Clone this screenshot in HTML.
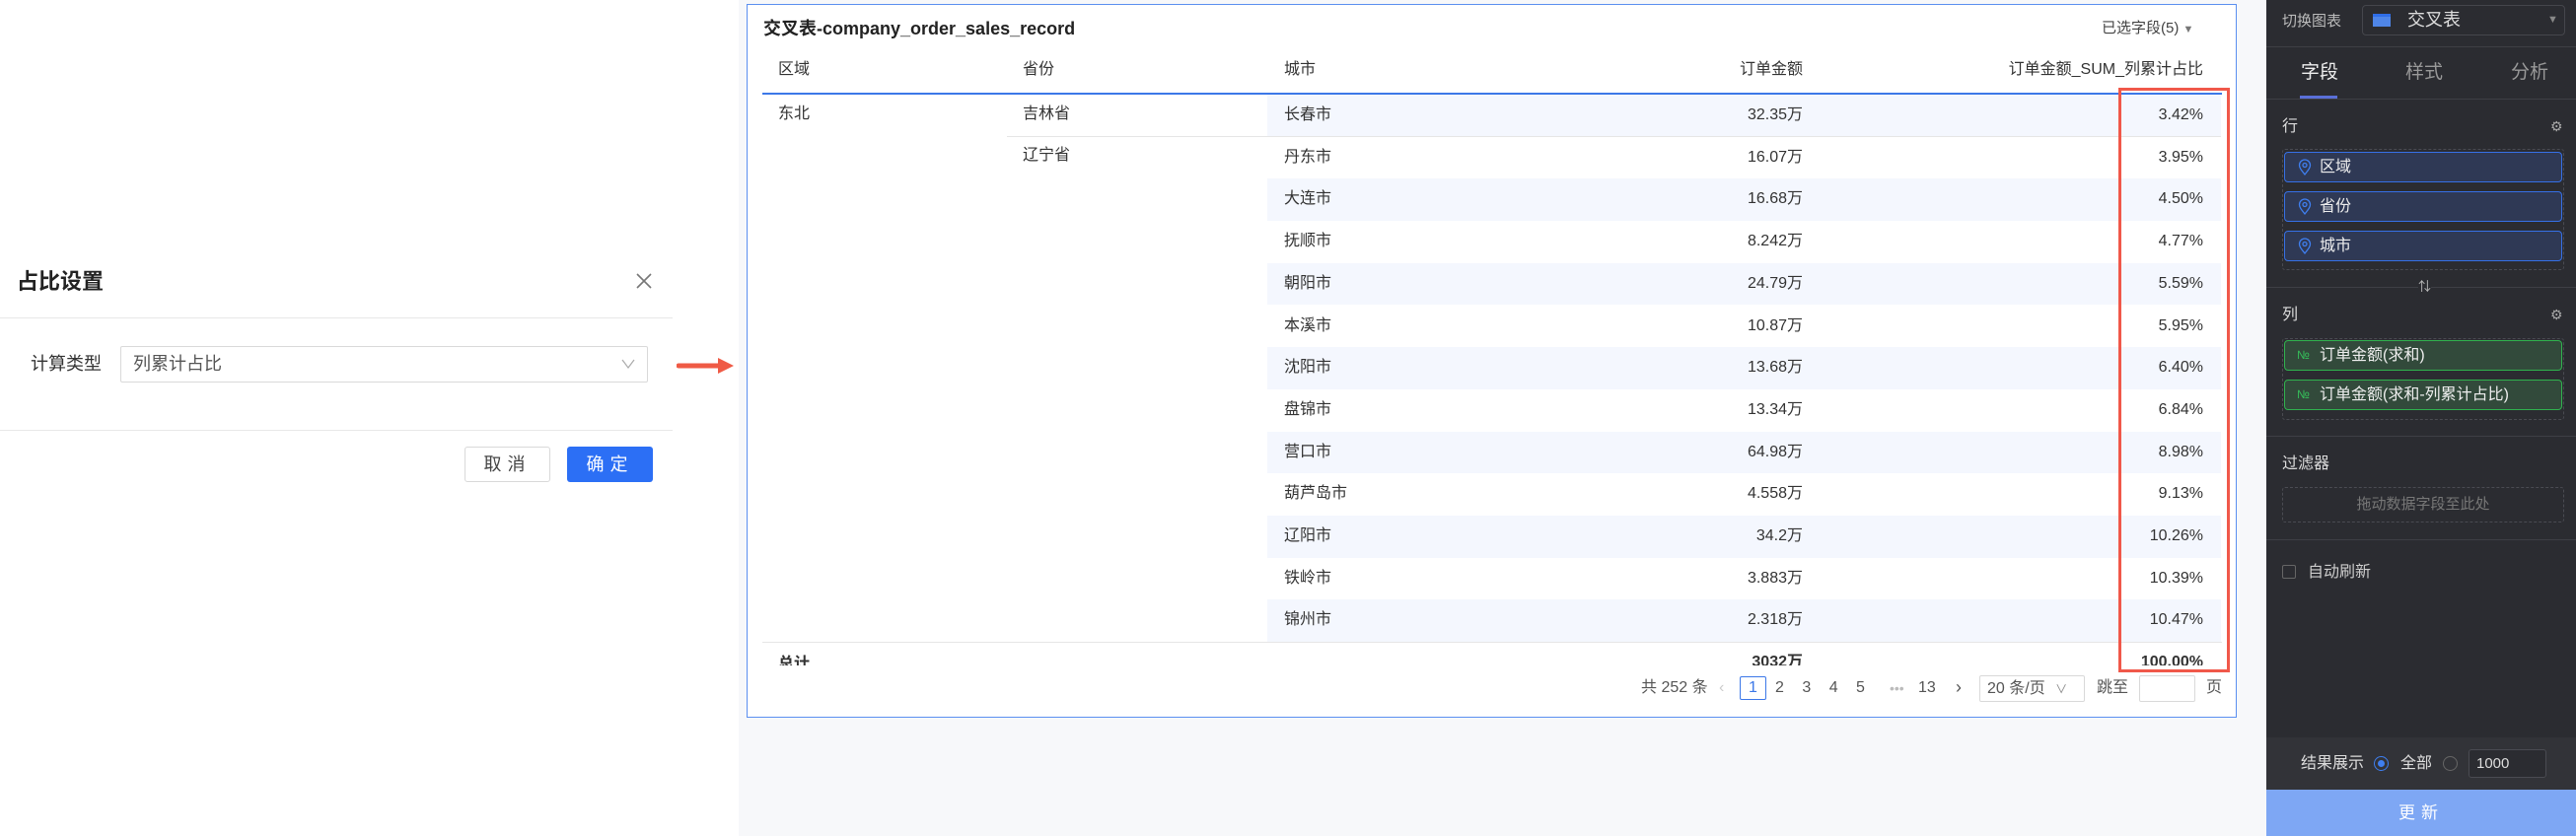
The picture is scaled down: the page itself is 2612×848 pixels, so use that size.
<!DOCTYPE html>
<html><head><meta charset="utf-8"><style>
*{margin:0;padding:0;box-sizing:border-box}
body{width:2612px;height:848px;position:relative;overflow:hidden;background:#fff;font-family:"Liberation Sans","Noto Sans CJK SC",sans-serif;color:#333;line-height:1.25}
.a{position:absolute;white-space:nowrap}
.t{font-size:16px;line-height:20px}
.r{text-align:right}
</style></head><body>
<!-- left dialog -->
<div class="a" style="left:17px;top:272px;font-size:22px;font-weight:bold;color:#222">占比设置</div>
<svg class="a" style="left:644px;top:276px" width="18" height="18"><path d="M2 2L16 16M16 2L2 16" stroke="#777" stroke-width="1.6"/></svg>
<div class="a" style="left:0;top:322px;width:682px;height:1px;background:#e8e8e8"></div>
<div class="a" style="left:31px;top:358px;font-size:18px;color:#333">计算类型</div>
<div class="a" style="left:122px;top:351px;width:535px;height:37px;border:1px solid #d9d9d9;border-radius:2px"></div>
<div class="a" style="left:135px;top:358px;font-size:18px;color:#555">列累计占比</div>
<svg class="a" style="left:630px;top:363px" width="14" height="12"><path d="M1 2L7 10L13 2" fill="none" stroke="#aaa" stroke-width="1.2"/></svg>
<div class="a" style="left:0;top:436px;width:682px;height:1px;background:#e8e8e8"></div>
<div class="a" style="left:471px;top:453px;width:87px;height:36px;border:1px solid #d9d9d9;border-radius:3px;font-size:18px;line-height:34px;text-align:center;color:#444;letter-spacing:6px">取消</div>
<div class="a" style="left:575px;top:453px;width:87px;height:36px;background:#2c6ff5;border-radius:3px;font-size:18px;line-height:36px;text-align:center;color:#fff;letter-spacing:6px">确定</div>
<svg class="a" style="left:686px;top:361px" width="60" height="20"><path d="M2 10H46" stroke="#ef5a45" stroke-width="5" stroke-linecap="round"/><path d="M42 2L58 10L42 18Z" fill="#ef5a45"/></svg>
<!-- gray bg -->
<div class="a" style="left:749px;top:0;width:1549px;height:848px;background:#f7f8fa"></div>
<!-- card -->
<div class="a" style="left:757px;top:4px;width:1511px;height:724px;background:#fff;border:1.5px solid #5b8ff0"></div>
<div class="a" style="left:774px;top:18px;font-size:18px;font-weight:bold;color:#222">交叉表-company_order_sales_record</div>
<div class="a" style="left:2131px;top:20px;font-size:15px;color:#444">已选字段(5) <span style="font-size:11px;color:#777">▼</span></div>
<div class="a t" style="left:789px;top:61px">区域</div>
<div class="a t" style="left:1037px;top:61px">省份</div>
<div class="a t" style="left:1302px;top:61px">城市</div>
<div class="a t r" style="left:1628px;width:200px;top:61px">订单金额</div>
<div class="a t r" style="left:1934px;width:300px;top:61px">订单金额_SUM_列累计占比</div>
<div class="a" style="left:773px;top:94px;width:1480px;height:2px;background:#3c78e8"></div>
<div class="a" style="left:773px;top:96px;width:1480px;height:579px;overflow:hidden">
<div class="a" style="left:512px;top:0;width:967px;height:42.7px;background:#f4f7fe"></div>
<div class="a" style="left:512px;top:85.4px;width:967px;height:42.7px;background:#f4f7fe"></div>
<div class="a" style="left:512px;top:170.8px;width:967px;height:42.7px;background:#f4f7fe"></div>
<div class="a" style="left:512px;top:256.2px;width:967px;height:42.7px;background:#f4f7fe"></div>
<div class="a" style="left:512px;top:341.6px;width:967px;height:42.7px;background:#f4f7fe"></div>
<div class="a" style="left:512px;top:427px;width:967px;height:42.7px;background:#f4f7fe"></div>
<div class="a" style="left:512px;top:512.4px;width:967px;height:42.7px;background:#f4f7fe"></div>
<div class="a" style="left:248px;top:42px;width:1231px;height:1px;background:#e6e6e6"></div>
<div class="a" style="left:0;top:555px;width:1480px;height:1px;background:#e6e6e6"></div>
<div class="a t" style="left:16px;top:10px">东北</div>
<div class="a t" style="left:264px;top:10px">吉林省</div>
<div class="a t" style="left:264px;top:52px">辽宁省</div>
</div>
<div class="a" style="left:773px;top:96px;width:1480px;height:579px;overflow:hidden;font-size:16px">
<div class="a" style="left:529px;top:0;line-height:42.7px">长春市<br>丹东市<br>大连市<br>抚顺市<br>朝阳市<br>本溪市<br>沈阳市<br>盘锦市<br>营口市<br>葫芦岛市<br>辽阳市<br>铁岭市<br>锦州市</div>
<div class="a r" style="left:855px;width:200px;top:0;line-height:42.7px">32.35万<br>16.07万<br>16.68万<br>8.242万<br>24.79万<br>10.87万<br>13.68万<br>13.34万<br>64.98万<br>4.558万<br>34.2万<br>3.883万<br>2.318万<br><b>3032万</b></div>
<div class="a r" style="left:1261px;width:200px;top:0;line-height:42.7px">3.42%<br>3.95%<br>4.50%<br>4.77%<br>5.59%<br>5.95%<br>6.40%<br>6.84%<br>8.98%<br>9.13%<br>10.26%<br>10.39%<br>10.47%<br><b>100.00%</b></div>
<div class="a t" style="left:16px;top:568px;font-weight:bold">总计</div>
</div>
<div class="a" style="left:2148px;top:89px;width:113px;height:593px;border:3.5px solid #f0584a"></div>
<!-- pagination -->
<div class="a" style="left:1664px;top:688px;font-size:16px;line-height:20px;color:#555">共 252 条</div>
<div class="a" style="left:1743px;top:688px;font-size:16px;line-height:20px;color:#ccc">‹</div>
<div class="a" style="left:1764px;top:686px;width:27px;height:24px;border:1px solid #3c78e8;border-radius:2px;color:#3c78e8;font-size:16px;line-height:22px;text-align:center">1</div>
<div class="a" style="left:1800px;top:688px;font-size:16px;line-height:20px;color:#555;word-spacing:14px">2 3 4 5</div>
<div class="a" style="left:1916px;top:688px;font-size:14px;line-height:20px;color:#bbb">•••</div>
<div class="a" style="left:1945px;top:688px;font-size:16px;line-height:20px;color:#555">13</div>
<div class="a" style="left:1983px;top:686px;font-size:18px;line-height:22px;color:#555">›</div>
<div class="a" style="left:2007px;top:685px;width:107px;height:27px;border:1px solid #d9d9d9;border-radius:2px;font-size:16px;color:#555;line-height:25px;padding-left:7px">20 条/页 <span style="font-size:12px;color:#888;margin-left:6px">∨</span></div>
<div class="a" style="left:2126px;top:688px;font-size:16px;line-height:20px;color:#555">跳至</div>
<div class="a" style="left:2169px;top:685px;width:57px;height:27px;border:1px solid #d9d9d9;border-radius:2px"></div>
<div class="a" style="left:2237px;top:688px;font-size:16px;line-height:20px;color:#555">页</div>
<!-- sidebar -->
<div class="a" style="left:2298px;top:0;width:314px;height:848px;background:#2b2c31"></div>
<div class="a" style="left:2314px;top:12px;font-size:15px;line-height:19px;color:#bbb">切换图表</div>
<div class="a" style="left:2395px;top:5px;width:206px;height:31px;border:1px solid #45464c;border-radius:4px"></div>
<div class="a" style="left:2406px;top:14px;width:18px;height:13px;background:#4f86e8;border-top:3px solid #2f6ee8"></div>
<div class="a" style="left:2441px;top:9px;font-size:18px;line-height:22px;color:#ddd">交叉表</div>
<div class="a" style="left:2583px;top:14px;font-size:11px;line-height:13px;color:#888">▼</div>
<div class="a" style="left:2298px;top:47px;width:314px;height:1px;background:#3e3f45"></div>
<div class="a" style="left:2333px;top:62px;font-size:19px;line-height:24px;color:#eee">字段</div>
<div class="a" style="left:2439px;top:62px;font-size:19px;line-height:24px;color:#999">样式</div>
<div class="a" style="left:2546px;top:62px;font-size:19px;line-height:24px;color:#999">分析</div>
<div class="a" style="left:2332px;top:97px;width:38px;height:3px;background:#5a6fd8"></div>
<div class="a" style="left:2298px;top:100px;width:314px;height:1px;background:#3e3f45"></div>
<div class="a" style="left:2314px;top:119px;font-size:16px;line-height:20px;color:#ddd">行</div>
<div class="a" style="left:2586px;top:119px;font-size:14px;line-height:18px;color:#aaa">⚙</div>
<div class="a" style="left:2314px;top:151px;width:286px;height:123px;border:1px dashed #4a4b52;border-radius:3px"></div>
<div class="a" style="left:2316px;top:154px;width:282px;height:31px;background:#2f3955;border:1px solid #3670e6;border-radius:4px"></div>
<div class="a" style="left:2316px;top:194px;width:282px;height:31px;background:#2f3955;border:1px solid #3670e6;border-radius:4px"></div>
<div class="a" style="left:2316px;top:234px;width:282px;height:31px;background:#2f3955;border:1px solid #3670e6;border-radius:4px"></div>
<svg class="a" style="left:2330px;top:161px" width="14" height="100"><g fill="none" stroke="#3f7ff0" stroke-width="1.3"><path d="M7 16C3 11 1.5 9 1.5 6.5A5.5 5.5 0 0 1 12.5 6.5C12.5 9 11 11 7 16Z"/><circle cx="7" cy="6.5" r="2"/><path transform="translate(0,40)" d="M7 16C3 11 1.5 9 1.5 6.5A5.5 5.5 0 0 1 12.5 6.5C12.5 9 11 11 7 16Z"/><circle cx="7" cy="46.5" r="2"/><path transform="translate(0,80)" d="M7 16C3 11 1.5 9 1.5 6.5A5.5 5.5 0 0 1 12.5 6.5C12.5 9 11 11 7 16Z"/><circle cx="7" cy="86.5" r="2"/></g></svg>
<div class="a" style="left:2352px;top:160px;font-size:16px;line-height:20px;color:#eee">区域</div>
<div class="a" style="left:2352px;top:200px;font-size:16px;line-height:20px;color:#eee">省份</div>
<div class="a" style="left:2352px;top:240px;font-size:16px;line-height:20px;color:#eee">城市</div>
<div class="a" style="left:2298px;top:291px;width:314px;height:1px;background:#3e3f45"></div>
<div class="a" style="left:2452px;top:283px;font-size:13px;line-height:16px;color:#bbb;background:#2b2c31">⇅</div>
<div class="a" style="left:2314px;top:310px;font-size:16px;line-height:20px;color:#ddd">列</div>
<div class="a" style="left:2586px;top:310px;font-size:14px;line-height:18px;color:#aaa">⚙</div>
<div class="a" style="left:2314px;top:343px;width:286px;height:83px;border:1px dashed #4a4b52;border-radius:3px"></div>
<div class="a" style="left:2316px;top:345px;width:282px;height:31px;background:#324a3b;border:1px solid #30b24e;border-radius:4px"></div>
<div class="a" style="left:2316px;top:385px;width:282px;height:31px;background:#324a3b;border:1px solid #30b24e;border-radius:4px"></div>
<div class="a" style="left:2329px;top:353px;font-size:12px;line-height:15px;color:#35c05a">№</div>
<div class="a" style="left:2329px;top:393px;font-size:12px;line-height:15px;color:#35c05a">№</div>
<div class="a" style="left:2352px;top:351px;font-size:16px;line-height:20px;color:#eee">订单金额(求和)</div>
<div class="a" style="left:2352px;top:391px;font-size:16px;line-height:20px;color:#eee">订单金额(求和-列累计占比)</div>
<div class="a" style="left:2298px;top:442px;width:314px;height:1px;background:#3e3f45"></div>
<div class="a" style="left:2314px;top:461px;font-size:16px;line-height:20px;color:#ddd">过滤器</div>
<div class="a" style="left:2314px;top:494px;width:286px;height:36px;border:1px dashed #4a4b52;border-radius:3px;font-size:15px;color:#777;text-align:center;line-height:34px">拖动数据字段至此处</div>
<div class="a" style="left:2298px;top:547px;width:314px;height:1px;background:#3e3f45"></div>
<div class="a" style="left:2314px;top:573px;width:14px;height:14px;border:1px solid #666;border-radius:2px"></div>
<div class="a" style="left:2340px;top:571px;font-size:16px;line-height:20px;color:#ccc">自动刷新</div>
<div class="a" style="left:2298px;top:748px;width:314px;height:53px;background:#323338"></div>
<div class="a" style="left:2333px;top:765px;font-size:16px;line-height:20px;color:#ddd">结果展示</div>
<div class="a" style="left:2407px;top:767px;width:15px;height:15px;border:1.5px solid #3f7ff0;border-radius:50%"></div>
<div class="a" style="left:2411px;top:771px;width:7px;height:7px;background:#3f7ff0;border-radius:50%"></div>
<div class="a" style="left:2434px;top:765px;font-size:16px;line-height:20px;color:#ddd">全部</div>
<div class="a" style="left:2477px;top:767px;width:15px;height:15px;border:1px solid #666;border-radius:50%"></div>
<div class="a" style="left:2503px;top:760px;width:79px;height:29px;border:1px solid #4a4b52;border-radius:3px;background:#2b2c31;font-size:15px;color:#ddd;line-height:27px;padding-left:7px">1000</div>
<div class="a" style="left:2298px;top:801px;width:314px;height:47px;background:#7ea7f4;color:#fff;font-size:17px;text-align:center;line-height:47px;letter-spacing:6px">更新</div>
</body></html>
